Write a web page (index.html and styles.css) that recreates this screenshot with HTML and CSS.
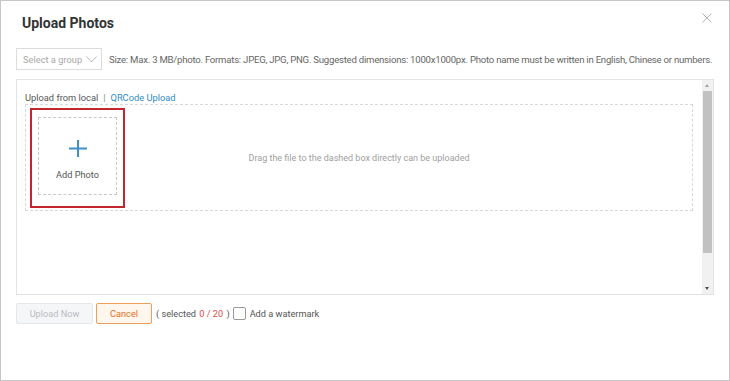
FILE: index.html
```html
<!DOCTYPE html>
<html lang="en">
<head>
    <meta charset="UTF-8">
    <title>Upload Photos</title>
    <link rel="stylesheet" href="styles.css">
</head>
<body>
    <div class="dialog">
        <div class="head">
            <h1>Upload Photos</h1>
            <svg class="close" width="10" height="10" viewBox="0 0 10 10">
                <path d="M0.5 0.5L9.5 9.5M9.5 0.5L0.5 9.5" stroke="#b4b4b4" stroke-width="1" fill="none"/>
            </svg>
        </div>

        <div class="toolbar">
            <div class="select">
                <span>Select a group</span>
                <svg width="11" height="7" viewBox="0 0 11 7">
                    <path d="M0.5 0.5L5.5 6L10.5 0.5" stroke="#b8b8b8" stroke-width="1" fill="none"/>
                </svg>
            </div>
            <p class="hint">Size: Max. 3 MB/photo. Formats: JPEG, JPG, PNG. Suggested dimensions: 1000x1000px. Photo name must be written in English, Chinese or numbers.</p>
        </div>

        <div class="panel">
            <div class="panel-body">
                <div class="tabs">
                    <span class="tab">Upload from local</span>
                    <span class="sep">|</span>
                    <span class="tab link">QRCode Upload</span>
                </div>
                <div class="dropzone">
                    <div class="mark">
                        <div class="tile">
                            <svg width="18" height="17" viewBox="0 0 18 17">
                                <path d="M9 0V17M0 8.5H18" stroke="#3d8fc7" stroke-width="2" fill="none"/>
                            </svg>
                            <span>Add Photo</span>
                        </div>
                    </div>
                    <p class="drop-text">Drag the file to the dashed box directly can be uploaded</p>
                </div>
            </div>
            <div class="scrollbar">
                <div class="arrow up"></div>
                <div class="thumb"></div>
                <div class="track"></div>
                <div class="arrow down"></div>
            </div>
        </div>

        <div class="footer">
            <button class="btn disabled" type="button">Upload Now</button>
            <button class="btn cancel" type="button">Cancel</button>
            <span class="count">( selected <em>0 / 20</em> )</span>
            <label class="check"><span class="box"></span>Add a watermark</label>
        </div>
    </div>
</body>
</html>
```

FILE: styles.css
```css
* {
    box-sizing: border-box;
    margin: 0;
    padding: 0;
    font-family: 'Roboto', 'Liberation Sans', sans-serif;
}

body {
    background: #fff;
}

.dialog {
    width: 730px;
    height: 381px;
    border: 1px solid #c6c6c6;
    padding: 0 15px;
    background: #fff;
}

.head {
    display: flex;
    justify-content: space-between;
    align-items: flex-start;
    height: 47px;
    padding: 13px 2px 0 6px;
}

.head h1 {
    font-size: 14px;
    font-weight: 700;
    line-height: 18px;
    color: #333;
}

.close {
    display: block;
    margin-top: -1px;
}

.toolbar {
    display: flex;
    align-items: center;
    gap: 7px;
    height: 22px;
}

.select {
    flex-shrink: 0;
    display: flex;
    align-items: center;
    justify-content: space-between;
    width: 86px;
    height: 22px;
    padding: 0 4px 0 6px;
    border: 1px solid #dcdcdc;
    font-size: 9.3px;
    color: #a8a8a8;
    white-space: nowrap;
}

.hint {
    font-size: 9.6px;
    letter-spacing: -0.24px;
    color: #666;
    white-space: nowrap;
}

.panel {
    display: flex;
    height: 216px;
    margin-top: 9px;
    border: 1px solid #e3e3e3;
}

.panel-body {
    flex: 1;
    padding: 10px 9px 0 8px;
}

.tabs {
    display: flex;
    align-items: center;
    gap: 5px;
    height: 14px;
    font-size: 9.3px;
    color: #555;
}

.tabs .sep {
    color: #888;
}

.tabs .link {
    color: #2f8cc5;
}

.dropzone {
    display: grid;
    grid-template-columns: 1fr auto 1fr;
    align-items: center;
    height: 107px;
    padding: 3px 4px;
    border: 1px dashed #d8d8d8;
}

.mark {
    justify-self: start;
    width: 95px;
    height: 100px;
    padding: 7px 6px;
    border: 2px solid #c3262c;
}

.tile {
    display: flex;
    flex-direction: column;
    align-items: center;
    justify-content: center;
    gap: 12px;
    height: 78px;
    padding-top: 8px;
    border: 1px dashed #c8c8c8;
    font-size: 9.2px;
    line-height: 11px;
    color: #555;
}

.tile svg {
    display: block;
}

.drop-text {
    font-size: 9px;
    color: #a0a0a0;
    white-space: nowrap;
}

.scrollbar {
    display: flex;
    flex-direction: column;
    width: 11px;
    background: #f1f1f1;
}

.arrow {
    height: 11px;
    position: relative;
}

.arrow::after {
    content: '';
    position: absolute;
    left: 3px;
    border-left: 2.5px solid transparent;
    border-right: 2.5px solid transparent;
}

.arrow.up::after {
    top: 4px;
    border-bottom: 3px solid #a3a3a3;
}

.arrow.down::after {
    top: 4px;
    border-top: 3px solid #505050;
}

.thumb {
    height: 162px;
    margin: 0 1px;
    background: #c1c1c1;
}

.track {
    flex: 1;
}

.footer {
    display: flex;
    align-items: center;
    gap: 3px;
    margin-top: 8px;
    font-size: 9.2px;
    color: #555;
}

.btn {
    height: 21px;
    border-radius: 2px;
    font-size: 9.2px;
    cursor: pointer;
}

.btn.disabled {
    width: 77px;
    background: #f5f6f8;
    border: 1px solid #e4e7eb;
    color: #b9bcc1;
}

.btn.cancel {
    width: 56px;
    background: #fff6ee;
    border: 1px solid #ee9f5e;
    color: #e8711d;
}

.count {
    margin-left: 1px;
}

.count em {
    font-style: normal;
    color: #e2474d;
    margin: 0 1px;
}

.check {
    display: flex;
    align-items: center;
    gap: 4px;
}

.check .box {
    width: 13px;
    height: 13px;
    border: 1px solid #9a9a9a;
    border-radius: 2px;
    background: #fff;
}
```
